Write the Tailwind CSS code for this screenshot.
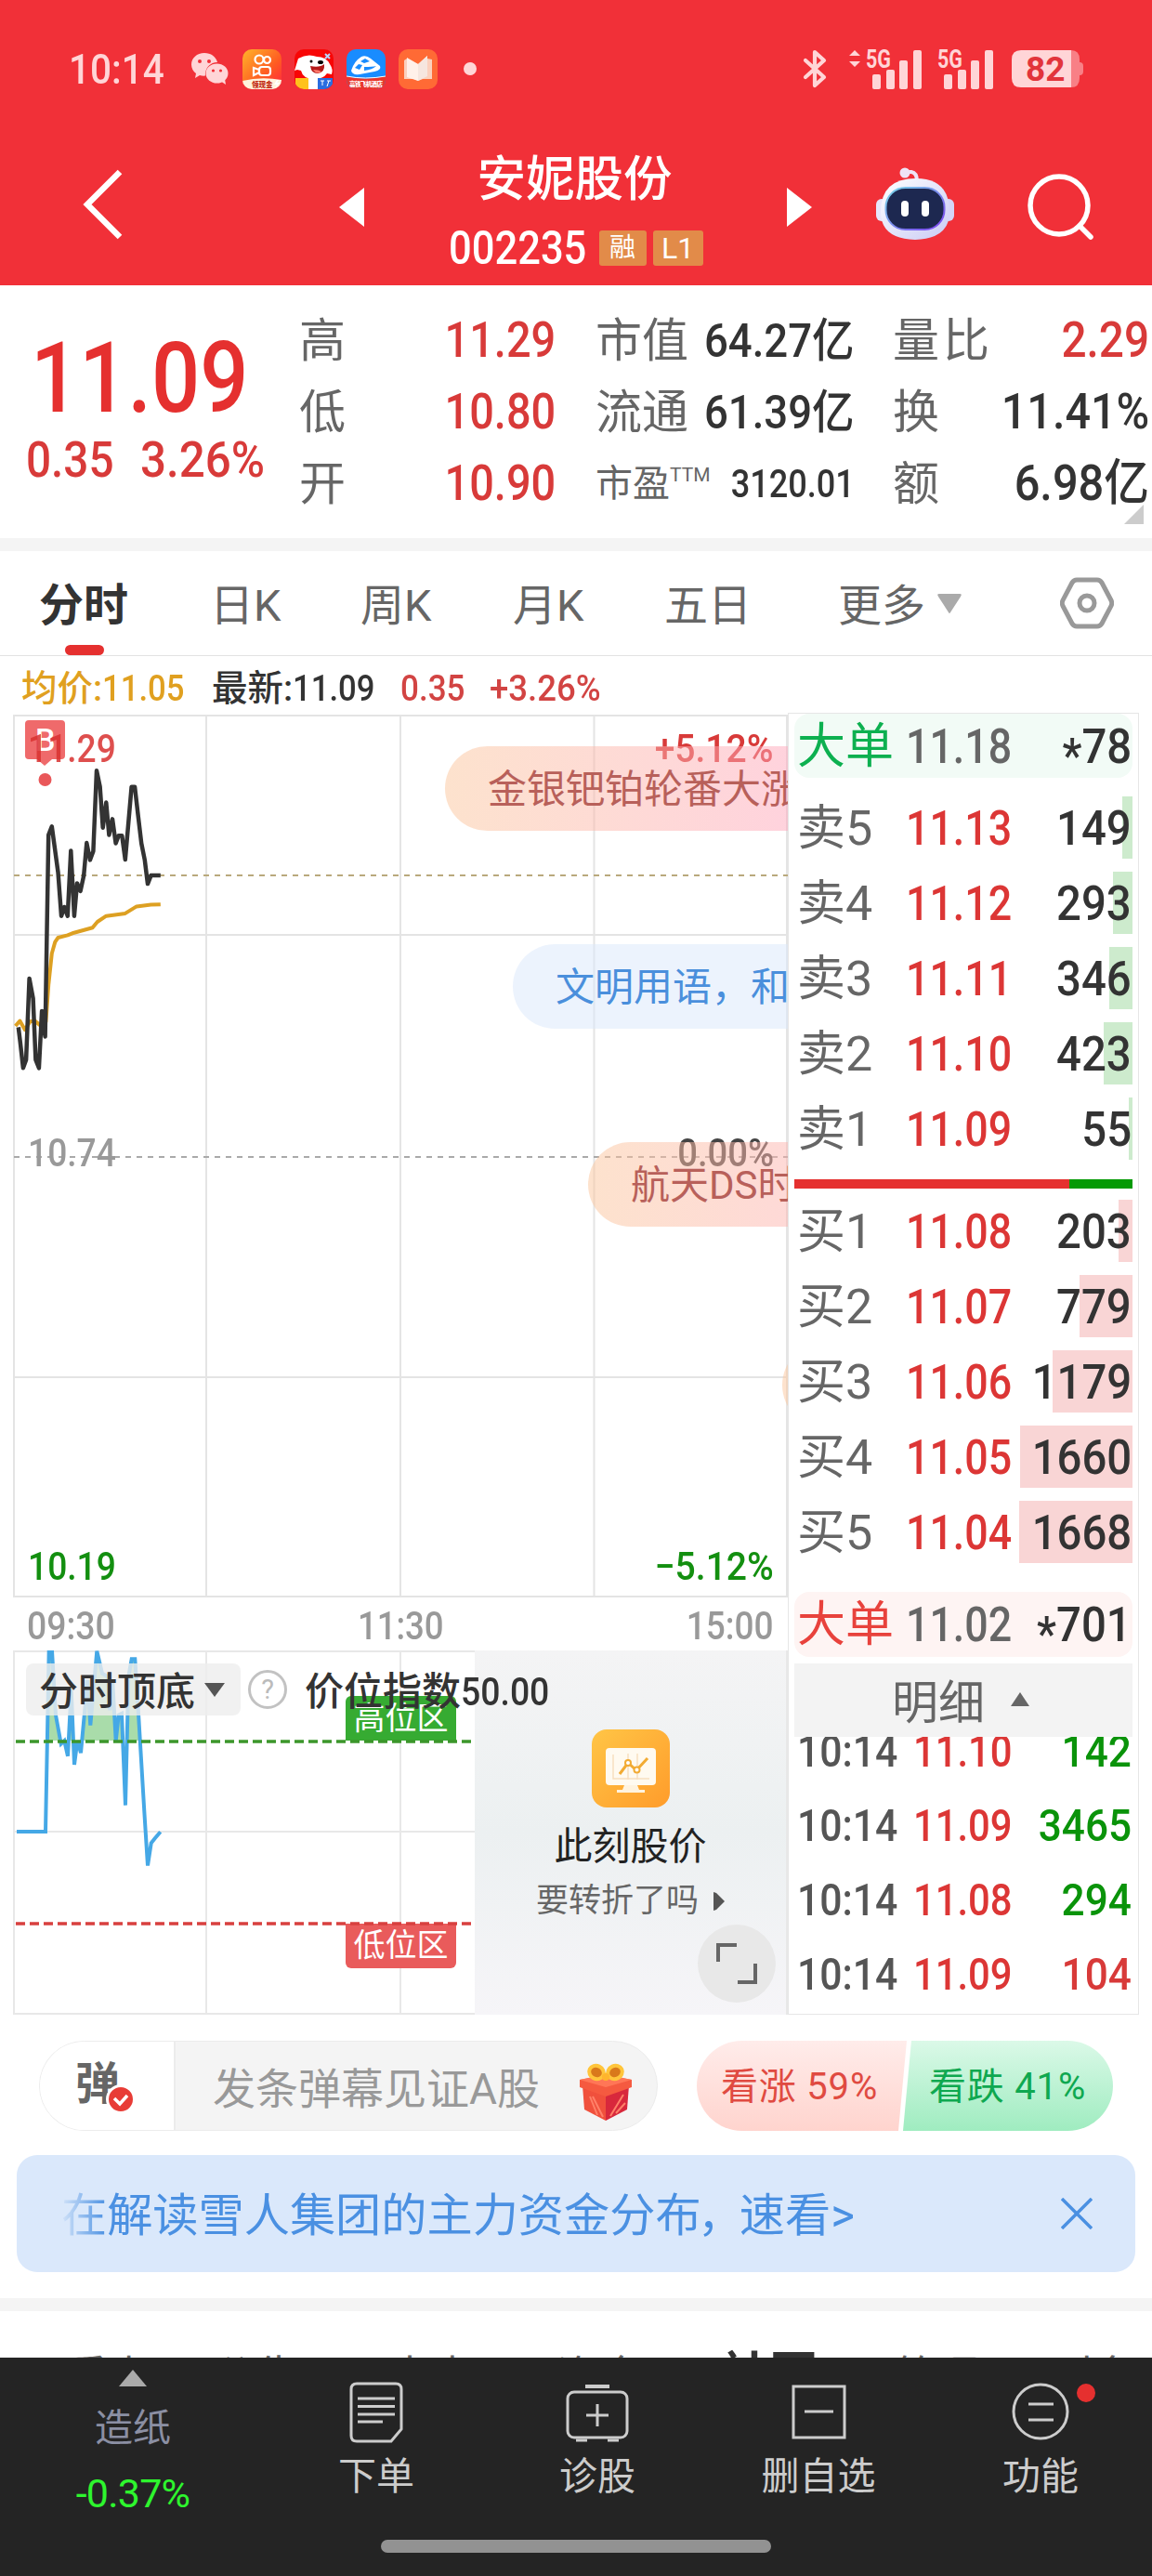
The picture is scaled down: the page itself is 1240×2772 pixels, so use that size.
<!DOCTYPE html>
<html lang="zh-CN">
<head>
  <meta charset="UTF-8" />
  <meta name="viewport" content="width=device-width, initial-scale=1.0" />
  <title>安妮股份 002235</title>
  <script src="https://cdn.jsdelivr.net/npm/@tailwindcss/browser@4"></script>
</head>
<body class="w-[1240px] h-[2772px] overflow-hidden bg-white text-[#333] font-['Roboto','Noto_Sans_CJK_SC',sans-serif] leading-none whitespace-nowrap">

  <!-- Header -->
  <header class="h-[307px] bg-[#f13038] text-white">
    <div class="h-[148px] flex items-center pl-[74px] pr-[74px] text-[#ffd5d7]">
      <span class="w-[132px] text-[45px] font-medium"><span class="inline-block origin-left scale-x-[.9]">10:14</span></span>
      <svg class="w-[40px] h-[36px]" viewBox="0 0 40 36" fill="#ffd5d7">
        <path d="M14 1C6 1 0 6.500 0 13.500c0 4 2 7.300 5 9.500l-1 5 5-3c2 .6 4 .8 6 .6A13 13 0 0 1 28 11C26.500 5 21 1 14 1z" />
        <ellipse cx="27.500" cy="23" rx="12" ry="10.500" /><path d="M31 31l6 4-1-6z" />
        <g fill="#f13038"><circle cx="9" cy="10" r="2" /><circle cx="19" cy="10" r="2" /><circle cx="23.500" cy="20" r="1.600" /><circle cx="31.500" cy="20" r="1.600" /></g>
      </svg>
      <svg class="w-[42px] h-[43px] ml-[15px]" viewBox="0 0 42 43">
        <defs><linearGradient id="ks" x1="0" y1="0" x2="1" y2="1"><stop offset="0" stop-color="#ffb52a" /><stop offset=".6" stop-color="#ff5b22" /><stop offset="1" stop-color="#ff2440" /></linearGradient>
        <clipPath id="app"><rect width="42" height="43" rx="10" /></clipPath></defs>
        <g clip-path="url(#app)"><rect width="42" height="43" fill="url(#ks)" />
          <g fill="none" stroke="#fff" stroke-width="2.200"><circle cx="18" cy="11" r="4.500" /><circle cx="26.500" cy="11.500" r="3.500" /><rect x="18" y="19" width="12" height="9" rx="3" /><path d="M18 22l-6-2v8l6-3" /></g>
          <path d="M0 34q20-5 42-1v10H0z" fill="#fff3dd" /><text x="10" y="40.500" font-size="7.500" font-weight="900" fill="#c22a10">领现金</text><path d="M37 33l-3 5h3l-2 4 5-6h-3l2-3z" fill="#fff" /></g>
      </svg>
      <svg class="w-[42px] h-[43px] ml-[14px]" viewBox="0 0 42 43">
        <g clip-path="url(#app)"><rect width="42" height="43" fill="#f80606" />
          <path d="M4 10Q14 4 24 8q10 0 14 8 4 6 2 11l-5-1q-4 6-14 6-12 0-14-9l-4-1-3 1z" fill="#fff" />
          <path d="M17 18q10 2 15-2 1 9-7 10-7 0-8-8z" fill="#b51a1a" /><path d="M20 22q6 0 9 2-5 4-9-2z" fill="#ff7b6d" />
          <circle cx="18" cy="13" r="1.500" /><ellipse cx="28" cy="14" rx="3" ry="2" /><path d="M33 5l5 5m0-5l-5 5" stroke="#b9d6ff" stroke-width="2" />
          <path d="M1 31h14v12H1z" fill="#ffc21c" /><path d="M15 31h12v12H15z" fill="#fff" /><path d="M25 31h16v12H25z" fill="#2a6de0" /><path d="M28 34h4m-2 0v5m5-5h4m-2 0l-2 6" stroke="#fff" /></g>
      </svg>
      <svg class="w-[42px] h-[43px] ml-[14px]" viewBox="0 0 42 43">
        <g clip-path="url(#app)"><rect width="42" height="43" fill="#198cff" />
          <path d="M5 23Q8 13 16 8q5-2 10 2l10 8q2 4-6 6l-16 3q-8 1-9-4z" fill="#fff" />
          <path d="M15 13l5-3 5 3-6 2zM9 20l4-4 4 1-3 5zM19 19q9 0 13-1-4 4-13 5z" fill="#198cff" />
          <path d="M0 29q20 5 42 0v14H0z" fill="#e8362c" /><path d="M0 29q20 4 42 0" stroke="#fff" fill="none" /><text x="3" y="39.500" font-size="6.500" font-weight="900" fill="#fff" textLength="36">高铁飞机酒店</text></g>
      </svg>
      <svg class="w-[42px] h-[43px] ml-[14px]" viewBox="0 0 42 43">
        <g clip-path="url(#app)"><rect width="42" height="43" fill="#ff6a35" />
          <path d="M6 12l3-2 12 6 10-9v3l5 1v21H26l-5 2-4-2H6z" fill="#fbd0bd" /><path d="M9 9l12 7v18L9 30z" fill="#fff1ea" /><path d="M21 16L31 7v22l-10 5z" fill="#f6e6df" /></g>
      </svg>
      <span class="ml-[28px] size-[14px] rounded-full bg-[#ffd5d7]"></span>
      <svg class="ml-auto w-[26px] h-[42px]" viewBox="0 0 26 42" fill="none" stroke="#ffd5d7" stroke-width="4.200" stroke-linejoin="round" stroke-linecap="round"><path d="M3 12l20 18-10 9V3l10 9L3 30" /></svg>
      <svg class="ml-[24px] w-[78px] h-[46px]" viewBox="0 0 78 46" fill="#ffd5d7">
        <path d="M6 3l6 6H0zM6 21l6-6H0z" />
        <text x="18" y="22" font-size="27" font-weight="700" textLength="27" lengthAdjust="spacingAndGlyphs">5G</text>
        <rect x="25" y="29" width="9" height="16" rx="2" /><rect x="40" y="24" width="9" height="21" rx="2" /><rect x="54" y="14" width="9" height="31" rx="2" /><rect x="69" y="3" width="9" height="42" rx="2" />
      </svg>
      <svg class="ml-[17px] w-[60px] h-[46px]" viewBox="0 0 60 46" fill="#ffd5d7">
        <text x="0" y="22" font-size="27" font-weight="700" textLength="27" lengthAdjust="spacingAndGlyphs">5G</text>
        <rect x="7" y="29" width="9" height="16" rx="2" /><rect x="22" y="24" width="9" height="21" rx="2" /><rect x="36" y="14" width="9" height="31" rx="2" /><rect x="51" y="3" width="9" height="42" rx="2" />
      </svg>
      <svg class="ml-[20px] w-[77px] h-[40px]" viewBox="0 0 77 40">
        <path d="M62 0h2q9 0 9 10v3q4 0 4 4v6q0 4-4 4v3q0 10-9 10h-2z" fill="#f88086" /><path d="M10 0h54v40H10Q0 40 0 30V10Q0 0 10 0z" fill="#ffd5d7" />
        <text x="15" y="33" font-size="37" font-weight="700" fill="#e2343b">82</text>
      </svg>
    </div>
    <div class="h-[159px] flex pl-[88px]">
      <svg class="mt-[34px] w-[44px] h-[76px]" viewBox="0 0 44 76" fill="none" stroke="#fff" stroke-width="6.500"><path d="M41 3L6 38l35 35" /></svg>
      <svg class="mt-[54px] ml-[233px] w-[27px] h-[42px]" viewBox="0 0 27 42" fill="#fff"><path d="M27 0v42L0 21z" /></svg>
      <div class="w-[455px] flex flex-col items-center">
        <h1 class="mt-[19px] -ml-[2px] text-[52.500px] font-medium">安妮股份</h1>
        <div class="mt-[22px] h-[50px] flex items-center gap-[7px]">
          <span class="w-[155px] text-[50px] font-medium"><span class="inline-block origin-left scale-x-[.87]">002235</span></span>
          <span class="w-[51px] h-[38px] rounded-[3px] bg-[#e28b49] flex items-center justify-center text-[28px]">融</span>
          <span class="w-[54px] h-[38px] rounded-[3px] bg-[#e28b49] flex items-center justify-center text-[32px]">L1</span>
        </div>
      </div>
      <svg class="mt-[54px] w-[27px] h-[42px]" viewBox="0 0 27 42" fill="#fff"><path d="M0 0v42l27-21z" /></svg>
      <svg class="mt-[32px] ml-[69px] w-[84px] h-[78px]" viewBox="0 0 84 78">
        <defs><linearGradient id="bot" x1="0" y1="0" x2="1" y2="1"><stop offset="0" stop-color="#fff" /><stop offset="1" stop-color="#c9cbf5" /></linearGradient>
        <linearGradient id="rim" x1="0" y1="0" x2="1" y2="1"><stop offset="0" stop-color="#78d8e8" /><stop offset="1" stop-color="#7b3ff0" /></linearGradient></defs>
        <path d="M31 5h7q6 1 6 10" fill="none" stroke="#efe3f6" stroke-width="4" /><circle cx="31" cy="6" r="5.500" fill="#efe3f6" />
        <rect x="0" y="34" width="12" height="24" rx="6" fill="#e6e6fb" /><rect x="72" y="34" width="12" height="24" rx="6" fill="#d5d5f8" />
        <path d="M43 12q36 0 36 36 0 29-37 30Q5 77 5 48 5 12 43 12z" fill="url(#bot)" />
        <rect x="10.500" y="22" width="63" height="45" rx="21" fill="#1d2850" stroke="url(#rim)" stroke-width="2" />
        <rect x="27" y="36" width="8" height="17" rx="4" fill="#fff" /><rect x="49" y="36" width="8" height="17" rx="4" fill="#fff" />
      </svg>
      <svg class="mt-[38px] ml-[78px] w-[74px] h-[72px]" viewBox="0 0 74 72" fill="none" stroke="#fff" stroke-width="5.500" stroke-linecap="round"><circle cx="35" cy="35" r="31" /><path d="M57 57l12 12" /></svg>
    </div>
  </header>

  <!-- Quote summary -->
  <section class="relative h-[272px] pt-[21px] flex font-medium text-[53px]">
    <div class="w-[298px] shrink-0 text-[#e5302f]">
      <div class="pl-[33px] mt-[27px] text-[105px]"><span class="inline-block origin-left scale-x-[.875]">11.09</span></div>
      <div class="pl-[28px] mt-[9px] flex text-[#d83a39]"><span class="w-[123px]"><span class="inline-block origin-left scale-x-[.9]">0.35</span></span><span class="inline-block origin-left scale-x-[.93]">3.26%</span></div>
    </div>
    <div class="ml-[24px] w-[276px] grid auto-rows-[77px] text-[#d83a39]">
      <div class="flex items-center justify-between"><span class="text-[50px] font-normal text-[#666]">高</span><span class="origin-right scale-x-[.885]">11.29</span></div>
      <div class="flex items-center justify-between"><span class="text-[50px] font-normal text-[#666]">低</span><span class="origin-right scale-x-[.885]">10.80</span></div>
      <div class="flex items-center justify-between"><span class="text-[50px] font-normal text-[#666]">开</span><span class="origin-right scale-x-[.885]">10.90</span></div>
    </div>
    <div class="ml-[43px] w-[277px] grid auto-rows-[77px] text-[50px]">
      <div class="flex items-center justify-between"><span class="font-normal text-[#666]">市值</span><span class="origin-right scale-x-[.91]">64.27亿</span></div>
      <div class="flex items-center justify-between"><span class="font-normal text-[#666]">流通</span><span class="origin-right scale-x-[.91]">61.39亿</span></div>
      <div class="flex items-center justify-between text-[42px]"><span class="flex text-[40px] font-normal text-[#666]">市盈<small class="text-[21px]">TTM</small></span><span class="origin-right scale-x-[.86]">3120.01</span></div>
    </div>
    <div class="ml-[43px] w-[276px] grid auto-rows-[77px]">
      <div class="flex items-center justify-between"><span class="text-[50px] font-normal tracking-[4px] text-[#666]">量比</span><span class="origin-right scale-x-[.9] text-[#d83a39]">2.29</span></div>
      <div class="flex items-center justify-between"><span class="text-[50px] font-normal text-[#666]">换</span><span class="origin-right scale-x-[.915]">11.41%</span></div>
      <div class="flex items-center justify-between"><span class="text-[50px] font-normal text-[#666]">额</span><span class="origin-right scale-x-[.92]">6.98亿</span></div>
    </div>
    <svg class="absolute right-[9px] bottom-[15px] size-[21px]" viewBox="0 0 21 21" fill="#ccc"><path d="M21 0v21H0z" /></svg>
  </section>
  <div class="h-[14px] bg-[#f4f4f4]"></div>

  <!-- Period tabs -->
  <nav class="h-[113px] border-b border-[#e2e2e2] pl-[42px] flex items-center text-[47px] text-[#666]">
    <div class="relative h-full w-[184px] pt-[6px] flex items-center text-[48px] font-bold text-[#333]">分时<i class="absolute left-[28px] bottom-0 w-[42px] h-[11px] rounded-full bg-[#e5302f]"></i></div>
    <span class="w-[162px] pt-[4px]">日K</span>
    <span class="w-[164px] pt-[4px]">周K</span>
    <span class="w-[163px] pt-[4px]">月K</span>
    <span class="w-[187px] pt-[4px]">五日</span>
    <span class="w-[107px] pt-[4px]">更多</span>
    <svg class="w-[26px] h-[21px]" viewBox="0 0 26 21" fill="#aaa"><path d="M2 0h22q3 0 1 3L14 20q-1 2-2 0L1 3Q-1 0 2 0z" /></svg>
    <svg class="ml-[106px] w-[58px] h-[56px]" viewBox="0 0 58 56" fill="none" stroke="#999" stroke-width="5" stroke-linejoin="round"><path d="M18 3h22q3 0 5 3l10 19q1.500 3 0 6L45 50q-2 3-5 3H18q-3 0-5-3L3 31q-1.500-3 0-6L13 6q2-3 5-3z" /><circle cx="29" cy="28" r="8" /></svg>
  </nav>

  <!-- Chart + order book -->
  <main class="flex h-[1462px]">
    <div class="w-[848px] shrink-0">
      <div class="h-[63px] pl-[23px] pt-[8px] flex items-center text-[38.500px] font-medium text-[#d24443]">
        <span class="w-[205px] text-[#e0a020]">均价:<span class="inline-block origin-left scale-x-[.9]">11.05</span></span><span class="w-[203px] text-[#333]">最新:<span class="inline-block origin-left scale-x-[.9]">11.09</span></span><span class="w-[96px]"><span class="inline-block origin-left scale-x-[.91]">0.35</span></span><span class="inline-block origin-left scale-x-[.95]">+3.26%</span>
      </div>

      <div class="relative h-[950px] overflow-hidden text-[42px] font-medium">
        <svg class="absolute inset-0" width="848" height="950" fill="none">
          <g stroke="#e4e4e4" stroke-width="2"><path d="M15 1h833M15 949h833M15 0v950M222 0v950M431 0v950M639.500 0v950M847 0v950M15 237h833M15 713h833" /></g>
          <path d="M15 173h833" stroke="#b9a97c" stroke-width="2" stroke-dasharray="6 6" />
          <path d="M15 476h833" stroke="#aaa" stroke-width="2" stroke-dasharray="6 6" />
          <rect x="27" y="6" width="43" height="42" rx="4" fill="#ef6a6b" /><path d="M40 48h16l-8 7z" fill="#ef6a6b" />
          <text x="38" y="39" font-size="34" fill="#fff" font-weight="500">B</text>
          <circle cx="48.500" cy="70" r="7" fill="#e95759" />
          <polyline stroke="#dda022" stroke-width="4" stroke-linejoin="round" points="16.600,335 21.400,329.600 26.900,339.200 32.400,330.300 37.600,329.600 42.700,333.900 49.400,330.300 52.200,291 55.800,257 59.300,244.600 62.500,240 72.800,237.400 77.900,235.300 99.600,229.200 104.800,223 114.300,216.700 134.800,213.900 147,206.400 162.500,204.600 172.800,204.200" />
          <polyline stroke="#333" stroke-width="4.500" stroke-linejoin="round" points="19.800,336.400 21.700,351.700 24.900,380.300 28.100,371.400 31.600,283.900 35.600,305.300 38.400,371.400 41.900,380.300 45.100,318.900 48.600,346.400 52.200,129.600 55.800,120.300 62.500,169.600 66,216.700 69.200,207 72.800,216.700 76.300,146.400 79.900,216.700 83,181.400 86.600,189.900 90.200,173.100 93.300,138.100 96.900,156.400 100.400,147 104,60.300 107.600,77.400 110.700,121.700 114.300,94.600 117.400,129.600 121,112.400 124.600,138.500 127.700,130.300 131.300,130.300 134.800,156 141.600,77.800 145.100,77.800 148.700,108.900 152.200,138.500 155.800,156.400 159,182.100 162.500,173.100 172.800,173.100" />
        </svg>
        <span class="absolute left-[30px] top-[16px] origin-left scale-x-[.885] text-[#d8302f]/85">11.29</span>
        <span class="absolute right-[15px] top-[16px] origin-right scale-x-[.93] text-[#d83a39]">+5.12%</span>
        <span class="absolute left-[30px] top-[451px] origin-left scale-x-[.885] text-[#999]">10.74</span>
        <span class="absolute right-[15px] top-[451px] origin-right scale-x-[.91] text-[#444]">0.00%</span>
        <span class="absolute left-[30px] top-[896px] origin-left scale-x-[.885] text-[#138f10]">10.19</span>
        <span class="absolute right-[15px] top-[896px] origin-right scale-x-[.93] text-[#138f10]">−5.12%</span>
        <!-- floating comments -->
        <div class="absolute left-[479px] top-[34px] w-[500px] h-[91px] pt-[3px] rounded-full bg-linear-to-r from-[#fbc59b]/50 to-[#ff9ac4]/50 pl-[46px] flex items-center font-normal text-[#b8605a]">金银钯铂轮番大涨</div>
        <div class="absolute left-[552px] top-[247px] w-[500px] h-[91px] pt-[3px] rounded-full bg-[#d9e7fb]/50 pl-[46px] flex items-center font-normal text-[#4a8fdc]">文明用语，和谐讨论</div>
        <div class="absolute left-[633px] top-[460px] w-[500px] h-[91px] pt-[3px] rounded-full bg-linear-to-r from-[#fbc59b]/50 to-[#ff9ac4]/50 pl-[46px] flex items-center font-normal text-[#b8605a]">航天DS时代</div>
        <div class="absolute left-[842px] top-[676px] w-[500px] h-[91px] rounded-full bg-[#fbc59b]/50"></div>
      </div>

      <div class="h-[57px] pl-[29px] pr-[15px] flex items-center justify-between text-[42px] font-medium text-[#999] pt-[5px]">
        <span class="origin-left scale-x-[.89]">09:30</span><span class="scale-x-[.87]">11:30</span><span class="origin-right scale-x-[.88]">15:00</span>
      </div>

      <div class="relative h-[392px]">
        <svg class="absolute inset-0" width="848" height="392" fill="none">
          <defs><clipPath id="high"><path d="M15 0h833v97H15z" /></clipPath></defs>
          <g stroke="#e8e8e8" stroke-width="2"><path d="M15 1h833M15 391h833M15 0v392M222 0v392M431 0v392M15 195h833" /></g>
          <polygon clip-path="url(#high)" fill="#a9dcaa" points="49,195 52.700,.7 56,.7 60,69.600 65.700,100.600 69.300,97.200 73,113.700 76.700,42 80,123 83.300,97.200 87,110.200 94.300,31.700 97.300,80.600 104.300,.7 110,24.800 116,28.300 118.300,64.400 121.300,35.200 124.700,97.200 127.700,69.600 131,67.900 135,166.700 138.300,28.300 141.700,9.300 145.300,9.300 148.300,55.800 155.300,195" />
          <polyline stroke="#45a8e6" stroke-width="4" points="18,195 49,195 52.700,.7 56,.7 60,69.600 65.700,100.600 69.300,97.200 73,113.700 76.700,42 80,123 83.300,97.200 87,110.200 94.300,31.700 97.300,80.600 104.300,.7 110,24.800 116,28.300 118.300,64.400 121.300,35.200 124.700,97.200 127.700,69.600 131,67.900 135,166.700 138.300,28.300 141.700,9.300 145.300,9.300 148.300,55.800 155.300,173 159,231.500 162.700,207.400 166.700,202.200 172.700,195.300" />
        </svg>
        <span class="absolute left-[372px] top-[49px] w-[119px] h-[48px] rounded-t-md bg-[#36ab32] flex items-center justify-center text-[34px] text-white">高位区</span>
        <span class="absolute left-[372px] top-[294px] w-[119px] h-[48px] rounded-b-md bg-[#e95b5b] flex items-center justify-center pb-[3px] text-[34px] text-white">低位区</span>
        <svg class="absolute inset-0" width="510" height="392" fill="none" stroke-width="3.500" stroke-dasharray="10 5"><path d="M17 98h490" stroke="#3c962b" /><path d="M17 294h490" stroke="#d8403f" /></svg>

        <div class="absolute left-[511px] top-0 w-[337px] h-[392px] bg-linear-to-b from-[#f4f4f5] via-[#ecf0f1] to-[#f6f5f8] border-r-2 border-[#e8e8e8] flex flex-col items-center">
          <svg class="mt-[85px] w-[84px] h-[84px]" viewBox="0 0 84 84">
            <defs><linearGradient id="ai" x1="0" y1="0" x2="1" y2="1"><stop offset="0" stop-color="#ffc546" /><stop offset="1" stop-color="#ff9c2b" /></linearGradient></defs>
            <rect width="84" height="84" rx="16" fill="url(#ai)" /><rect x="15" y="20" width="54" height="40" rx="4" fill="#fffaf0" /><path d="M35 60h14l2 5h6v3H27v-3h6z" fill="#fff3df" />
            <path d="M23 27v26h39M39 26v28M49 26v28" stroke="#f8dfc0" stroke-width="1.500" fill="none" /><path d="M30 48l9-12 9 8 12-13" stroke="#f2ab33" stroke-width="3" fill="none" /><g fill="#fff" stroke="#f2ab33" stroke-width="2"><circle cx="39" cy="36" r="3" /><circle cx="48.500" cy="43.500" r="3" /></g>
          </svg>
          <span class="mt-[22px] text-[41px] text-[#222]">此刻股价</span>
          <span class="mt-[20px] flex items-center gap-[16px] text-[35px] text-[#666]">要转折了吗<svg class="w-[12px] h-[20px]" viewBox="0 0 12 20" fill="#555"><path d="M0 0l3 1 9 9-9 9-3 1z" /></svg></span>
        </div>
        <div class="absolute left-[751px] top-[295px] size-[84px] rounded-full bg-[#e8e8e8]"><svg width="84" height="84" fill="none" stroke="#666" stroke-width="4"><path d="M22 40V22h20M62 42v20H43" /></svg></div>

        <div class="absolute left-[28px] top-[14px] h-[56px] flex items-center text-[42px] font-medium">
          <span class="w-[231px] h-full rounded-lg bg-[#ededed]/80 pl-[14px] pt-[5px] flex items-center">分时顶底<svg class="ml-[10px] -mt-[4px] w-[22px] h-[15px]" viewBox="0 0 22 15" fill="#555"><path d="M0 0h22L11 15z" /></svg></span>
          <span class="ml-[8px] size-[42px] rounded-full border-[3px] border-[#c2c2c2] flex items-center justify-center text-[29px] font-normal text-[#bbb]">?</span>
          <span class="ml-[19px] pt-[5px]">价位指数<span class="inline-block origin-left scale-x-[.89]">50.00</span></span>
        </div>
      </div>
    </div>

    <!-- Order book -->
    <aside class="mt-[61px] w-[378px] h-[1401px] border border-[#e6e6e6] pl-[6px] pr-[6px] text-[52px]">
      <div class="h-[69px] rounded-2xl bg-[#f2fbf6] pl-[3px] pr-[1px] pt-[2px] flex items-center font-medium">
        <span class="w-[117px] shrink-0 font-normal text-[#0db050]">大单</span><span class="w-[110px] shrink-0 origin-left scale-x-[.86] text-[#666]">11.18</span><span class="ml-auto origin-right scale-x-[.91]"><span class="relative top-[10px]">*</span>78</span>
      </div>
      <div id="asks" class="mt-[20px] grid grid-cols-1 gap-[14px]"></div>
      <div class="mt-[21px] h-[10px] flex"><i class="w-[296px] bg-[#e5302f]"></i><i class="flex-1 bg-[#059a05]"></i></div>
      <div id="bids" class="mt-[12px] grid grid-cols-1 gap-[14px]"></div>
      <div class="mt-[31px] h-[70px] rounded-2xl bg-[#fef4f3] pl-[3px] pr-[1px] pt-[2px] flex items-center font-medium">
        <span class="w-[117px] shrink-0 font-normal text-[#e8423c]">大单</span><span class="w-[110px] shrink-0 origin-left scale-x-[.86] text-[#666]">11.02</span><span class="ml-auto origin-right scale-x-[.91]"><span class="relative top-[10px]">*</span>701</span>
      </div>
      <div class="mt-[7px] h-[79px] bg-[#f3f3f3] flex items-center justify-center gap-[28px] pt-[6px] pr-[6px] text-[50px] text-[#666]">明细<svg class="-mt-[8px] w-[20px] h-[15px]" viewBox="0 0 20 15" fill="#666"><path d="M10 0l10 15H0z" /></svg></div>
      <div class="h-[294px] overflow-hidden"><div id="ticks" class="-mt-[24px] grid grid-cols-1 auto-rows-[80px] text-[48px] font-medium"></div></div>
    </aside>
  </main>

  <!-- Comment input and vote -->
  <section class="mt-[28px] h-[97px] pl-[42px] flex">
    <div class="w-[666px] rounded-full border border-[#ececec] bg-[#f4f4f4] overflow-hidden flex items-center">
      <div class="relative w-[146px] h-full border-r-2 border-[#ececec] bg-white pl-[38px] pt-[22px] text-[48px] font-bold text-[#666]">弹
        <svg class="absolute left-[71px] top-[46px] size-[32px]" viewBox="0 0 32 32"><circle cx="16" cy="16" r="14.500" fill="#e83c36" stroke="#fff" stroke-width="3" /><path d="M9 15l6 6 8-9" fill="none" stroke="#fff" stroke-width="3.500" /></svg>
      </div>
      <span class="ml-[40px] pt-[6px] text-[46px] text-[#999]">发条弹幕见证A股</span>
      <svg class="ml-[42px] mt-[12px] w-[58px] h-[62px]" viewBox="0 0 58 62">
        <path d="M4 24l25 10v28L6 50z" fill="#f0503c" /><path d="M54 24L29 34v28l23-12z" fill="#d8283c" /><path d="M1 18l28-5 28 5v8L29 36 1 26z" fill="#f55a40" /><path d="M1 18l28 8 28-8-28-6z" fill="#ff7657" />
        <path d="M12 36l8 20m-5-20l11 22M48 34L34 57m16-14L40 54" stroke="#ff8068" stroke-width="2" />
        <g fill="#d9791b" stroke="#ffc53b" stroke-width="4"><ellipse cx="19" cy="10" rx="8" ry="7" transform="rotate(25 19 10)" /><ellipse cx="39" cy="10" rx="8" ry="7" transform="rotate(-25 39 10)" /></g><circle cx="29" cy="15" r="4" fill="#ffb52d" />
      </svg>
    </div>
    <div class="relative ml-[42px] w-[448px] rounded-full overflow-hidden flex items-center text-[40px] tracking-[.8px]">
      <svg class="absolute inset-0" width="448" height="97">
        <defs><linearGradient id="up" x2="0" y2="1"><stop stop-color="#ffecea" /><stop offset="1" stop-color="#ffd4ce" /></linearGradient><linearGradient id="down" x2="0" y2="1"><stop stop-color="#dbf9e8" /><stop offset="1" stop-color="#9fecc0" /></linearGradient></defs>
        <path d="M0 0h226l-9 97H0z" fill="url(#up)" /><path d="M231 0h217v97H222z" fill="url(#down)" />
      </svg>
      <span class="relative w-[224px] pl-[26px] pt-[2px] text-[#e04a41]">看涨 59%</span><span class="relative pl-[26px] pt-[2px] text-[#0fa850]">看跌 41%</span>
    </div>
  </section>

  <section class="mt-[26px] mx-[18px] h-[126px] rounded-[22px] bg-[#dae8fb] pl-[48px] pr-[46px] flex items-center justify-between text-[49.200px] text-[#4a90e2]">
    <span class="pt-[6px]"><span class="bg-linear-to-r from-[#4a90e2]/5 to-[#4a90e2] bg-clip-text text-transparent">在</span>解读雪人集团的主力资金分布<span class="-ml-[4px] -mr-[4px]">，</span>速看&gt;</span>
    <svg class="w-[34px] h-[34px]" viewBox="0 0 34 34" stroke="#4a90e2" stroke-width="3.500"><path d="M1 1l32 32M33 1L1 33" /></svg>
  </section>

  <div class="mt-[28px] h-[14px] bg-[#f4f4f4]"></div>
  <!-- Lower tabs, mostly hidden by the toolbar -->
  <div class="h-[50px] pt-[47px] overflow-hidden flex text-[46px] text-[#666]">
    <span class="ml-[70px] w-[160px]">看点</span><span class="w-[188px]">公告</span><span class="w-[181px]">大事</span><span class="w-[177px]">资金</span><span class="-mt-[3px] w-[187px] text-[52px] font-bold text-[#333]">社区</span><span class="w-[170px]">简况</span><span>财务</span>
  </div>

  <!-- Toolbar -->
  <footer class="relative h-[235px] bg-[#242424] pt-[13px] text-[41px] text-[#ccc]">
    <div class="flex">
      <div class="w-[286px] flex flex-col items-center text-[#8b8fa3]">
        <svg class="w-[30px] h-[18px]" viewBox="0 0 30 18" fill="#aaa"><path d="M15 0l15 18H0z" /></svg>
        <span class="mt-[25px]">造纸</span>
        <span class="mt-[28px] text-[43px] tracking-[-.8px] text-[#2ef52e]">-0.37%</span>
      </div>
      <div class="w-[238px] pt-[12px] flex flex-col items-center gap-[15px]">
        <svg class="w-[60px] h-[68px]" viewBox="0 0 60 68" fill="none" stroke="#ccc" stroke-width="3"><path d="M9 3h42q6 0 6 6v43L46 65H9q-6 0-6-6V9q0-6 6-6zM10 19h40M10 27.500h40M10 36h40M10 44h27" /></svg>
        <span>下单</span>
      </div>
      <div class="w-[238px] pt-[12px] flex flex-col items-center gap-[15px]">
        <svg class="w-[70px] h-[68px]" viewBox="0 0 70 68" fill="none" stroke="#ccc" stroke-width="3"><path d="M22 6h26" stroke-width="4" /><rect x="3" y="12" width="64" height="49" rx="7" /><path d="M35 25v24M23 37h24M12 64h12M46 64h12" /></svg>
        <span>诊股</span>
      </div>
      <div class="w-[238px] pt-[12px] flex flex-col items-center gap-[15px]">
        <svg class="w-[60px] h-[68px]" viewBox="0 0 60 68" fill="none" stroke="#ccc" stroke-width="3"><path d="M3 6h55v55H3zM15 33h31" /></svg>
        <span>删自选</span>
      </div>
      <div class="relative w-[240px] pt-[12px] flex flex-col items-center gap-[15px]">
        <svg class="w-[62px] h-[68px]" viewBox="0 0 62 68" fill="none" stroke="#ccc" stroke-width="3"><circle cx="31" cy="33" r="29" /><path d="M18 25h27M18 42h27" /></svg>
        <span>功能</span>
        <i class="absolute left-[159px] top-[15px] size-[20px] rounded-full bg-[#e5302f]"></i>
      </div>
    </div>
    <div class="absolute left-[410px] bottom-[25px] w-[420px] h-[14px] rounded-full bg-[#929292]"></div>
  </footer>

  <script>
    const asks = [['卖5', '11.13', 149], ['卖4', '11.12', 293], ['卖3', '11.11', 346], ['卖2', '11.10', 423], ['卖1', '11.09', 55]];
    const bids = [['买1', '11.08', 203], ['买2', '11.07', 779], ['买3', '11.06', 1179], ['买4', '11.05', 1660], ['买5', '11.04', 1668]];
    const ticks = [['11.10', 142, 'text-[#0a930a]'], ['11.09', 3465, 'text-[#0a930a]'], ['11.08', 294, 'text-[#0a930a]'], ['11.09', 104, 'text-[#d83a39]']];
    const maxVolume = 1668;

    // one price level, with a volume bar behind the number
    function levelRow([label, price, volume], barClass) {
      return `<div class="relative h-[67px] pl-[3px] pr-[1px] pt-[2px] flex items-center font-medium">
        <i class="absolute right-0 top-0 h-full ${barClass}" style="width:${volume / maxVolume * 122}px"></i>
        <span class="w-[117px] shrink-0 font-normal text-[#666]">${label}</span>
        <span class="w-[110px] shrink-0 origin-left scale-x-[.86] text-[#dc3635]">${price}</span>
        <span class="relative ml-auto origin-right scale-x-[.91]">${volume}</span>
      </div>`;
    }

    document.getElementById('asks').innerHTML = asks.map(r => levelRow(r, 'bg-[#cdebcd]')).join('');
    document.getElementById('bids').innerHTML = bids.map(r => levelRow(r, 'bg-[#f9d5d5]')).join('');
    document.getElementById('ticks').innerHTML = ticks.map(([price, volume, color]) =>
      `<div class="flex items-center pl-[3px] pr-[1px]">
        <span class="w-[125px] shrink-0"><span class="inline-block origin-left scale-x-[.89] text-[#555]">10:14</span></span>
        <span class="w-[110px] shrink-0 origin-left scale-x-[.87] text-[#dc3635]">${price}</span>
        <span class="ml-auto origin-right scale-x-[.92] ${color}">${volume}</span>
      </div>`).join('');
  </script>
</body>
</html>
